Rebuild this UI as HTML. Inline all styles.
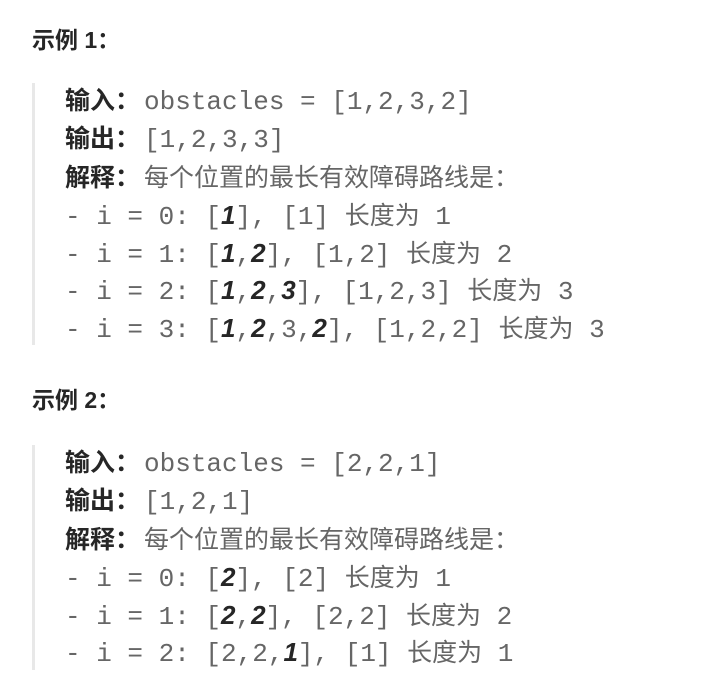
<!DOCTYPE html>
<html><head><meta charset="utf-8"><style>
body{margin:0;background:#fff;width:707px;height:699px;overflow:hidden;font-family:"Liberation Sans","Noto Sans CJK SC",sans-serif;}
h3{position:absolute;left:32px;margin:0;font-size:23px;line-height:30px;font-weight:bold;color:#262626;}
.pre{position:absolute;left:32px;border-left:3px solid #e8e8e8;padding-left:30px;font-family:"Liberation Mono","Noto Sans CJK SC",monospace;font-size:26px;color:#666;white-space:pre;}
.pre div{height:37.7px;line-height:37.7px;overflow:visible;}
.pre strong{color:#262626;font-family:"Liberation Sans","Noto Sans CJK SC",sans-serif;font-size:25px;margin-right:4px;}
.pre b{color:#262626;font-family:"Liberation Sans",sans-serif;font-style:italic;}
.zh{font-family:"Noto Sans CJK SC",sans-serif;font-size:25px;}
</style></head><body>
<h3 style="top:25px">示例 1：</h3>
<div class="pre" style="top:83px;height:262px"><div><strong>输入：</strong>obstacles = [1,2,3,2]</div><div><strong>输出：</strong>[1,2,3,3]</div><div><strong>解释：</strong><span class="zh">每个位置的最长有效障碍路线是：</span></div><div>- i = 0: [<b>1</b>], [1] <span class="zh">长度为</span> 1</div><div>- i = 1: [<b>1</b>,<b>2</b>], [1,2] <span class="zh">长度为</span> 2</div><div>- i = 2: [<b>1</b>,<b>2</b>,<b>3</b>], [1,2,3] <span class="zh">长度为</span> 3</div><div>- i = 3: [<b>1</b>,<b>2</b>,3,<b>2</b>], [1,2,2] <span class="zh">长度为</span> 3</div></div>
<h3 style="top:385px">示例 2：</h3>
<div class="pre" style="top:445px;height:225px"><div><strong>输入：</strong>obstacles = [2,2,1]</div><div><strong>输出：</strong>[1,2,1]</div><div><strong>解释：</strong><span class="zh">每个位置的最长有效障碍路线是：</span></div><div>- i = 0: [<b>2</b>], [2] <span class="zh">长度为</span> 1</div><div>- i = 1: [<b>2</b>,<b>2</b>], [2,2] <span class="zh">长度为</span> 2</div><div>- i = 2: [2,2,<b>1</b>], [1] <span class="zh">长度为</span> 1</div></div>
</body></html>
